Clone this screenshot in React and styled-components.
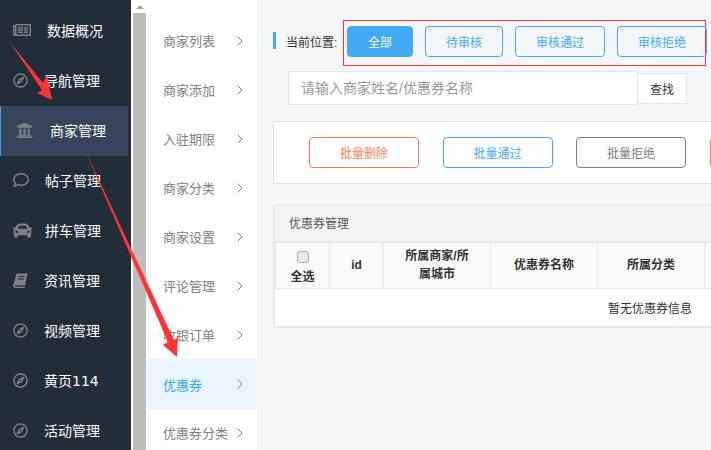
import React from 'react';
import styled, { createGlobalStyle } from 'styled-components';
import { FaRegNewspaper, FaRegCompass, FaUniversity, FaRegComment, FaCar } from 'react-icons/fa';
import { FiChevronRight } from 'react-icons/fi';

const GlobalStyle = createGlobalStyle`
  html, body { margin: 0; padding: 0; }
  body { font-family: "Liberation Sans", "Noto Sans CJK SC", sans-serif; }
  * { box-sizing: border-box; }
`;

const Page = styled.div`
  position: relative;
  display: flex;
  width: 711px;
  height: 450px;
  overflow: hidden;
  background: #f5f6f8;
`;

const Sidebar = styled.nav`
  flex: 0 0 131px;
  padding-top: 6px;
  background: #222d3a;
  font-family: "DejaVu Sans", "Noto Sans CJK SC", sans-serif;
  overflow: hidden;
`;

const NavItem = styled.div`
  display: flex;
  align-items: center;
  height: 50px;
  width: 128px;
  padding-bottom: 2px;
  color: #fff;
  font-size: 14px;
  background: ${p => (p.$active ? '#36455c' : 'transparent')};
  border-left: ${p => (p.$active ? '1px solid #35a2f4' : '1px solid transparent')};
`;

const NavIcon = styled.span`
  display: flex;
  justify-content: flex-start;
  width: ${p => p.$slot}px;
  padding-left: ${p => p.$pad}px;
  flex: none;
  color: #7f8185;
  font-size: ${p => p.$size || 15}px;
`;

const Scrollbar = styled.div`
  flex: 0 0 16px;
  display: flex;
  flex-direction: column;
  align-items: center;
  background: #fff;
  padding-left: 2px;
  width: 16px;
`;

const ScrollArrow = styled.div`
  height: 13px;
  width: 100%;
  display: flex;
  align-items: center;
  justify-content: center;
  &::before {
    content: '';
    border-left: 4px solid transparent;
    border-right: 4px solid transparent;
    border-bottom: 4px solid #a3a3a3;
  }
`;

const ScrollThumb = styled.div`
  flex: 1;
  width: 13px;
  margin-right: 1px;
  background: #bdbdbd;
`;

const SubMenu = styled.div`
  flex: 0 0 110px;
  padding-top: 16px;
  background: #fff;
`;

const SubItem = styled.div`
  display: flex;
  align-items: center;
  justify-content: space-between;
  height: ${p => (p.$active ? 50 : 49)}px;
  margin-bottom: ${p => (p.$active ? -1 : 0)}px;
  padding: 0 9px 0 16px;
  font-size: 13px;
  color: ${p => (p.$active ? '#2ea7f5' : '#808080')};
  background: ${p => (p.$active ? '#eaf4fd' : 'transparent')};
`;

const Main = styled.main`
  flex: 1;
  min-width: 0;
  padding-top: 20px;
  padding-left: 16px;
  overflow: hidden;
`;

const Crumbs = styled.div`
  display: flex;
  align-items: center;
  height: 46px;
`;

const CrumbMark = styled.span`
  width: 3px;
  height: 17px;
  background: #42abf6;
  margin: 0 10px 5px 0;
`;

const CrumbLabel = styled.span`
  width: 57px;
  margin-bottom: 4px;
  font-size: 12px;
  color: #333;
`;

const Tabs = styled.div`
  display: flex;
  align-items: center;
  gap: 12px;
  width: 363px;
  height: 46px;
  padding: 0 0 3px 3px;
  border: 1px solid #f33;
`;

const Tab = styled.button`
  width: ${p => p.$w}px;
  height: 31px;
  padding: 0;
  flex: none;
  font: inherit;
  font-size: 12px;
  border-radius: 4px;
  border: 1px solid #42abf6;
  color: ${p => (p.$active ? '#fff' : '#42abf6')};
  background: ${p => (p.$active ? '#42abf6' : 'transparent')};
`;

const SearchRow = styled.div`
  display: flex;
  align-items: center;
  margin: 5px 0 16px 15px;
`;

const SearchInput = styled.input`
  width: 350px;
  height: 34px;
  padding: 0 12px;
  font: inherit;
  font-size: 14px;
  background: #fff;
  border: 1px solid #e4e6eb;
  outline: none;
  &::placeholder { color: #999; opacity: 1; }
`;

const SearchButton = styled.button`
  width: 49px;
  height: 31px;
  padding: 0;
  font: inherit;
  font-size: 12px;
  color: #333;
  background: #fff;
  border: 1px solid #e4e6eb;
  border-left: none;
`;

const ActionCard = styled.div`
  display: flex;
  align-items: center;
  gap: 23.5px;
  width: 480px;
  height: 63px;
  padding-left: 35px;
  margin-bottom: 20px;
  background: #fff;
  border: 1px solid #e0e1e3;
`;

const ActionButton = styled.button`
  width: 110px;
  height: 31px;
  flex: none;
  padding: 0;
  font: inherit;
  font-size: 12px;
  border-radius: 4px;
  background: #fff;
  border: 1px solid ${p => p.$color};
  color: ${p => p.$color};
`;

const Panel = styled.section`
  width: 760px;
  background: #fff;
  border: 2px solid #e7e8ea;
  border-top-width: 1px;
`;

const PanelTitle = styled.div`
  height: 38px;
  line-height: 39px;
  padding-left: 14px;
  font-size: 12px;
  color: #555;
  background: #f3f3f3;
  border-bottom: 2px solid #e7e8ea;
`;

const Table = styled.table`
  width: 749px;
  table-layout: fixed;
  border-collapse: collapse;
  font-size: 12px;
  color: #333;
`;

const Th = styled.th`
  width: ${p => p.$w}px;
  height: 45px;
  padding: ${p => p.$pad || '0 16px'};
  line-height: 18px;
  font-weight: 700;
  background: #fafafa;
  border: 1px solid #e7e8ea;
  border-top: none;
`;

const Td = styled.td`
  height: 38px;
  text-align: center;
`;

const CheckBox = styled.span`
  display: block;
  width: 12px;
  height: 12px;
  margin: 0 auto 5px;
  background: #e8e8e8;
  border: 1px solid #aaa;
  border-radius: 3px;
`;

const Arrows = styled.svg`
  position: absolute;
  top: 0;
  left: 0;
  pointer-events: none;
`;

// tilted book, the icon set has only an upright one
const BookIcon = () => (
  <svg width="15" height="15" viewBox="0 0 15 15">
    <path d="M3.5 0.5 H14.5 L12 12.5 H2.5 C1.6 12.5 1.6 13.8 2.5 13.8 H12.6 L11.8 15 H2 C0.4 15 -0.2 13.4 0.2 11.8 Z" fill="currentColor" />
    <path d="M5.5 3.5 H11.5 M5 6 H11" stroke="#222d3a" strokeWidth="1" />
  </svg>
);

const navItems = [
  { name: '数据概况', Icon: FaRegNewspaper, slot: 46, pad: 12, size: 18 },
  { name: '导航管理', Icon: FaRegCompass, slot: 43, pad: 12 },
  { name: '商家管理', Icon: FaUniversity, slot: 49, pad: 15, size: 17, active: true },
  { name: '帖子管理', Icon: FaRegComment, slot: 44, pad: 12, size: 16 },
  { name: '拼车管理', Icon: FaCar, slot: 44, pad: 12, size: 19 },
  { name: '资讯管理', Icon: BookIcon, slot: 43, pad: 12 },
  { name: '视频管理', Icon: FaRegCompass, slot: 43, pad: 12 },
  { name: '黄页114', Icon: FaRegCompass, slot: 43, pad: 12 },
  { name: '活动管理', Icon: FaRegCompass, slot: 43, pad: 12 },
];

const subItems = ['商家列表', '商家添加', '入驻期限', '商家分类', '商家设置', '评论管理', '收银订单', '优惠券', '优惠券分类'];

const tabs = [
  { name: '全部', w: 66, active: true },
  { name: '待审核', w: 78 },
  { name: '审核通过', w: 90 },
  { name: '审核拒绝', w: 90 },
];

// the fourth button runs off the right edge, only its border shows
const actions = [
  { name: '批量删除', color: '#fb7d55' },
  { name: '批量通过', color: '#42abf6' },
  { name: '批量拒绝', color: '#808080' },
  { name: '', color: '#fb7d55' },
];

export default function App() {
  return (
    <Page>
      <GlobalStyle />
      <Sidebar>
        {navItems.map(({ name, Icon, slot, pad, size, active }) => (
          <NavItem key={name} $active={active}>
            <NavIcon $slot={slot} $pad={pad} $size={size}><Icon /></NavIcon>
            {name}
          </NavItem>
        ))}
      </Sidebar>
      <Scrollbar>
        <ScrollArrow />
        <ScrollThumb />
      </Scrollbar>
      <SubMenu>
        {subItems.map(name => (
          <SubItem key={name} $active={name === '优惠券'}>
            {name}
            <FiChevronRight size={16} strokeWidth={1.5} />
          </SubItem>
        ))}
      </SubMenu>
      <Main>
        <Crumbs>
          <CrumbMark />
          <CrumbLabel>当前位置:</CrumbLabel>
          <Tabs>
            {tabs.map(t => (
              <Tab key={t.name} $w={t.w} $active={t.active}>{t.name}</Tab>
            ))}
          </Tabs>
        </Crumbs>
        <SearchRow>
          <SearchInput placeholder="请输入商家姓名/优惠券名称" />
          <SearchButton>查找</SearchButton>
        </SearchRow>
        <ActionCard>
          {actions.map((a, i) => (
            <ActionButton key={i} $color={a.color}>{a.name}</ActionButton>
          ))}
        </ActionCard>
        <Panel>
          <PanelTitle>优惠券管理</PanelTitle>
          <Table>
            <thead>
              <tr>
                <Th $w={54} $pad="6px 0 0"><CheckBox />全选</Th>
                <Th $w={54}>id</Th>
                <Th $w={107}>所属商家/所属城市</Th>
                <Th $w={107}>优惠券名称</Th>
                <Th $w={107}>所属分类</Th>
                <Th $w={107} />
                <Th $w={107} />
                <Th $w={106} />
              </tr>
            </thead>
            <tbody>
              <tr><Td colSpan={8}>暂无优惠券信息</Td></tr>
            </tbody>
          </Table>
        </Panel>
      </Main>
      <Arrows width="711" height="450" viewBox="0 0 711 450">
        <polygon points="9,41 43,83 47,75 52,100 37,93 42,90" fill="#f33" />
        <polygon points="84,148 174,340 178,337 177,357 163,345 168,342" fill="#f33" />
      </Arrows>
    </Page>
  );
}
